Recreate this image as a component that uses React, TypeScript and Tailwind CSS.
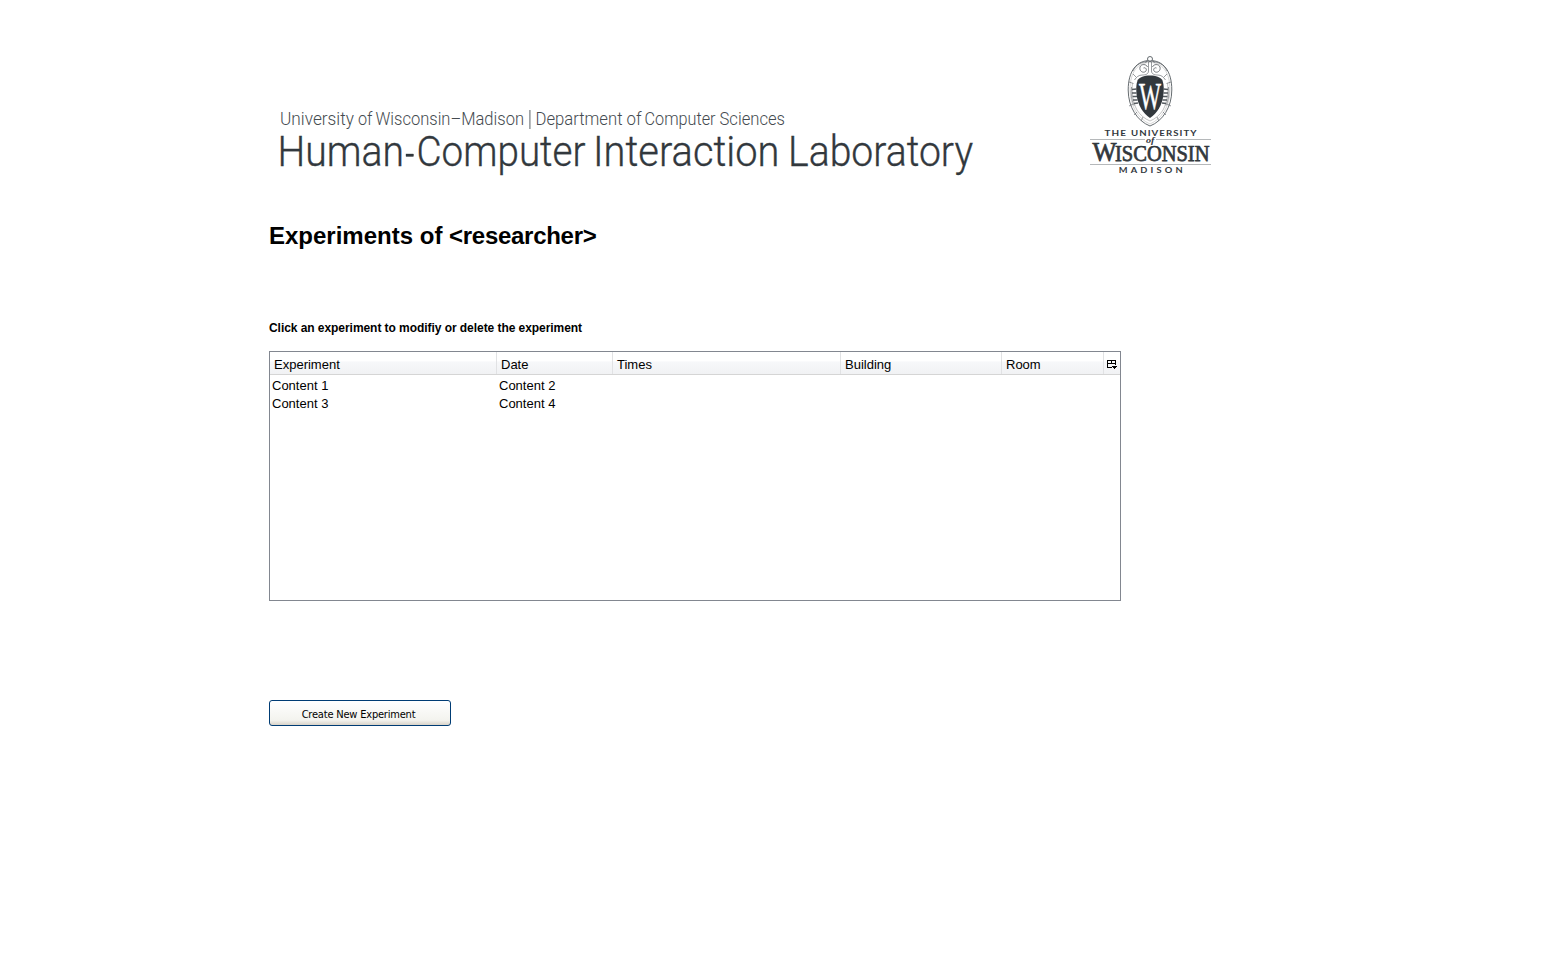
const columns = [
  { label: 'Experiment', width: 'w-[227px]' },
  { label: 'Date', width: 'w-[116px]' },
  { label: 'Times', width: 'w-[228px]' },
  { label: 'Building', width: 'w-[161px]' },
  { label: 'Room', width: 'w-[102px]' },
];

const rows = [
  ['Content 1', 'Content 2'],
  ['Content 3', 'Content 4'],
];

function Wordmark() {
  return (
    <svg className="overflow-visible" width="710" height="80" viewBox="270 105 710 80" fill="#32383d" fontFamily="Roboto, sans-serif" fontWeight="300" aria-label="Human-Computer Interaction Laboratory">
      <g fontSize="18" fill="#454b50">
        <text x="280" y="125" textLength="74" lengthAdjust="spacingAndGlyphs">University</text>
        <text x="358" y="125" textLength="14.500" lengthAdjust="spacingAndGlyphs">of</text>
        <text x="375.500" y="125" textLength="148.500" lengthAdjust="spacingAndGlyphs">Wisconsin–Madison</text>
        <text x="535.500" y="125" textLength="87" lengthAdjust="spacingAndGlyphs">Department</text>
        <text x="626.500" y="125" textLength="15" lengthAdjust="spacingAndGlyphs">of</text>
        <text x="644.500" y="125" textLength="71" lengthAdjust="spacingAndGlyphs">Computer</text>
        <text x="719.500" y="125" textLength="65.500" lengthAdjust="spacingAndGlyphs">Sciences</text>
      </g>
      <rect x="529.300" y="110" width="1.200" height="19" fill="#777c80" />
      <g fontSize="42" stroke="#32383d" strokeWidth="0.350">
        <text x="277.500" y="165.700" textLength="126.500" lengthAdjust="spacingAndGlyphs">Human</text>
        <rect x="406" y="154" width="7.500" height="2.500" />
        <text x="416.500" y="165.700" textLength="169" lengthAdjust="spacingAndGlyphs">Computer</text>
        <text x="593" y="165.700" textLength="186.500" lengthAdjust="spacingAndGlyphs">Interaction</text>
        <text x="788" y="165.700" textLength="185" lengthAdjust="spacingAndGlyphs">Laboratory</text>
      </g>
    </svg>
  );
}

function CrestHalf() {
  return (
    <g fill="none" stroke="#555b60" strokeWidth="0.600">
      <path d="M1147.500 67c-1-3-6-3.500-7.500 0-1 4 3 6.500 5.500 4.500 2-2 0-4.500-2-3.500" strokeWidth="0.800" />
      <path d="M1148.500 62v9c0 3-3 4-6 4-4 0-6 2-8 5M1147 62c-5 0-11 2-14 9" />
      <path d="M1133 74l3 3M1129 82l4.500 1.500M1129 106l4-2M1134 115l3-3M1141 121l2-4" />
      <path d="M1132.500 83c-1 8 0 19 4.500 27 3 5 8 9 13 11" stroke="#999" />
      <path d="M1132 89.500l4.500-.5M1132 93h4.500M1132.500 96.500h4.500M1133 100h4.500M1134 103.500l4-.5" strokeWidth="1.700" />
      <path d="M1131.500 87c-1 6 0 13 2.500 18.500" />
    </g>
  );
}

function CrestLogo() {
  return (
    <svg className="overflow-visible" width="130" height="130" viewBox="1085 50 130 130" fill="#32383d" aria-label="The University of Wisconsin Madison">
      <path d="M1150 60.500c-13 0-21.800 10-21.800 29.500 0 17 9 31 21.800 36 12.800-5 21.800-19 21.800-36 0-19.500-8.800-29.500-21.800-29.500z" fill="white" stroke="#555b60" strokeWidth="0.900" />
      <path d="M1150 62.500c-12 0-20 9-20 27.500 0 16 8.300 29 20 34 11.700-5 20-18 20-34 0-18.500-8-27.500-20-27.500z" fill="none" stroke="#999" strokeWidth="0.400" />
      <CrestHalf />
      <g transform="translate(2300 0) scale(-1 1)"><CrestHalf /></g>
      <circle cx="1150" cy="59" r="2.500" fill="white" stroke="#555b60" strokeWidth="0.900" />
      <path d="M1145 62.500c1-2 9-2 10 0" fill="none" stroke="#555b60" strokeWidth="0.800" />
      <path d="M1150 75.500c-6 0-10.500 1.500-12.500 5-1.500 4-1.500 9-.8 15 1.200 9.500 6 17.500 13.300 22.500 7.300-5 12.100-13 13.300-22.500.7-6 .7-11-.8-15-2-3.500-6.500-5-12.500-5z" />
      <text x="1139" y="109" fill="white" stroke="white" strokeWidth="0.400" fontFamily="Liberation Serif, serif" fontSize="38" textLength="22" lengthAdjust="spacingAndGlyphs">W</text>
      <g fontFamily="Lato, sans-serif" fontWeight="700" fontSize="7.300" letterSpacing="0.800">
        <text x="1104.500" y="135.700" textLength="22.500" lengthAdjust="spacingAndGlyphs">THE</text>
        <text x="1131" y="135.700" textLength="66.500" lengthAdjust="spacingAndGlyphs">UNIVERSITY</text>
        <text x="1118.800" y="172.700" letterSpacing="2.500" textLength="67" lengthAdjust="spacingAndGlyphs">MADISON</text>
      </g>
      <path d="M1090 139.500h55M1156 139.500h55M1090 164.500h121" stroke="#b5b8ba" strokeWidth="1" />
      <text x="1146" y="143" fontFamily="Liberation Serif, serif" fontStyle="italic" fontWeight="700" fontSize="9" textLength="8.500" lengthAdjust="spacingAndGlyphs">of</text>
      <g fontFamily="Liberation Serif, serif" stroke="#32383d" strokeWidth="0.750">
        <text x="1092.500" y="160.700" fontSize="28" textLength="24" lengthAdjust="spacingAndGlyphs">W</text>
        <text x="1115" y="160.700" fontSize="23" textLength="94.500" lengthAdjust="spacingAndGlyphs">ISCONSIN</text>
      </g>
    </svg>
  );
}

function ColumnPicker() {
  return (
    <div className="flex-1 pt-2 pl-[3px]">
      <svg width="10" height="10" viewBox="0 0 10 10" shapeRendering="crispEdges" fill="black">
        <path d="M0 0h9v1h-9zM0 0h1v8h-1zM8 0h1v5h-1zM4 0h1v4h-1zM0 3h9v1h-9zM0 7h5v1h-5zM5 6h5v1h-5zM6 7h3v1h-3zM7 8h1v1h-1z" />
      </svg>
    </div>
  );
}

export default function App() {
  return (
    <main className="h-[955px] w-full overflow-hidden bg-white pl-[269px] font-['Liberation_Sans',Arial,sans-serif] text-black">
      <header className="flex h-[185px] items-end pl-px">
        <Wordmark />
        <div className="mb-[5px] ml-[105px]">
          <CrestLogo />
        </div>
      </header>
      <h1 className="mt-[35px] text-[24px] leading-8 font-bold">
        Experiments of <span className="tracking-[-0.28px]">&lt;researcher&gt;</span>
      </h1>
      <p className="mt-[68px] text-[12px] leading-4 font-bold tracking-[-0.055px]">Click an experiment to modifiy or delete the experiment</p>
      <section className="mt-[15px] h-[250px] w-[852px] border border-[#828790] text-[13px]">
        <div className="flex h-[23px] border-b border-[#d5d5d5] bg-linear-to-b from-white from-40% via-[#f7f8fa] via-45% to-[#f1f2f4]">
          {columns.map((column) => (
            <div key={column.label} className={`${column.width} shrink-0 border-r border-[#e1e2e4] pt-[3px] pl-1 leading-[19px]`}>
              {column.label}
            </div>
          ))}
          <ColumnPicker />
        </div>
        <div className="pt-[2px]">
          {rows.map((row) => (
            <div key={row[0]} className="flex h-[18px] leading-[18px]">
              <div className="w-[227px] pl-[2px]">{row[0]}</div>
              <div className="pl-[2px]">{row[1]}</div>
            </div>
          ))}
        </div>
      </section>
      <button className="mt-[99px] flex h-[26px] w-[182px] items-center justify-center rounded-[3px] border border-[#003c74] bg-linear-to-b from-white via-[#f3f3ee] via-80% to-[#d9d3c9] pt-[4px] pr-[3px] font-['DejaVu_Sans_Condensed','DejaVu_Sans',sans-serif] text-[11px]">
        <span className="tracking-[-0.2px]">Create New Experiment</span>
      </button>
    </main>
  );
}
